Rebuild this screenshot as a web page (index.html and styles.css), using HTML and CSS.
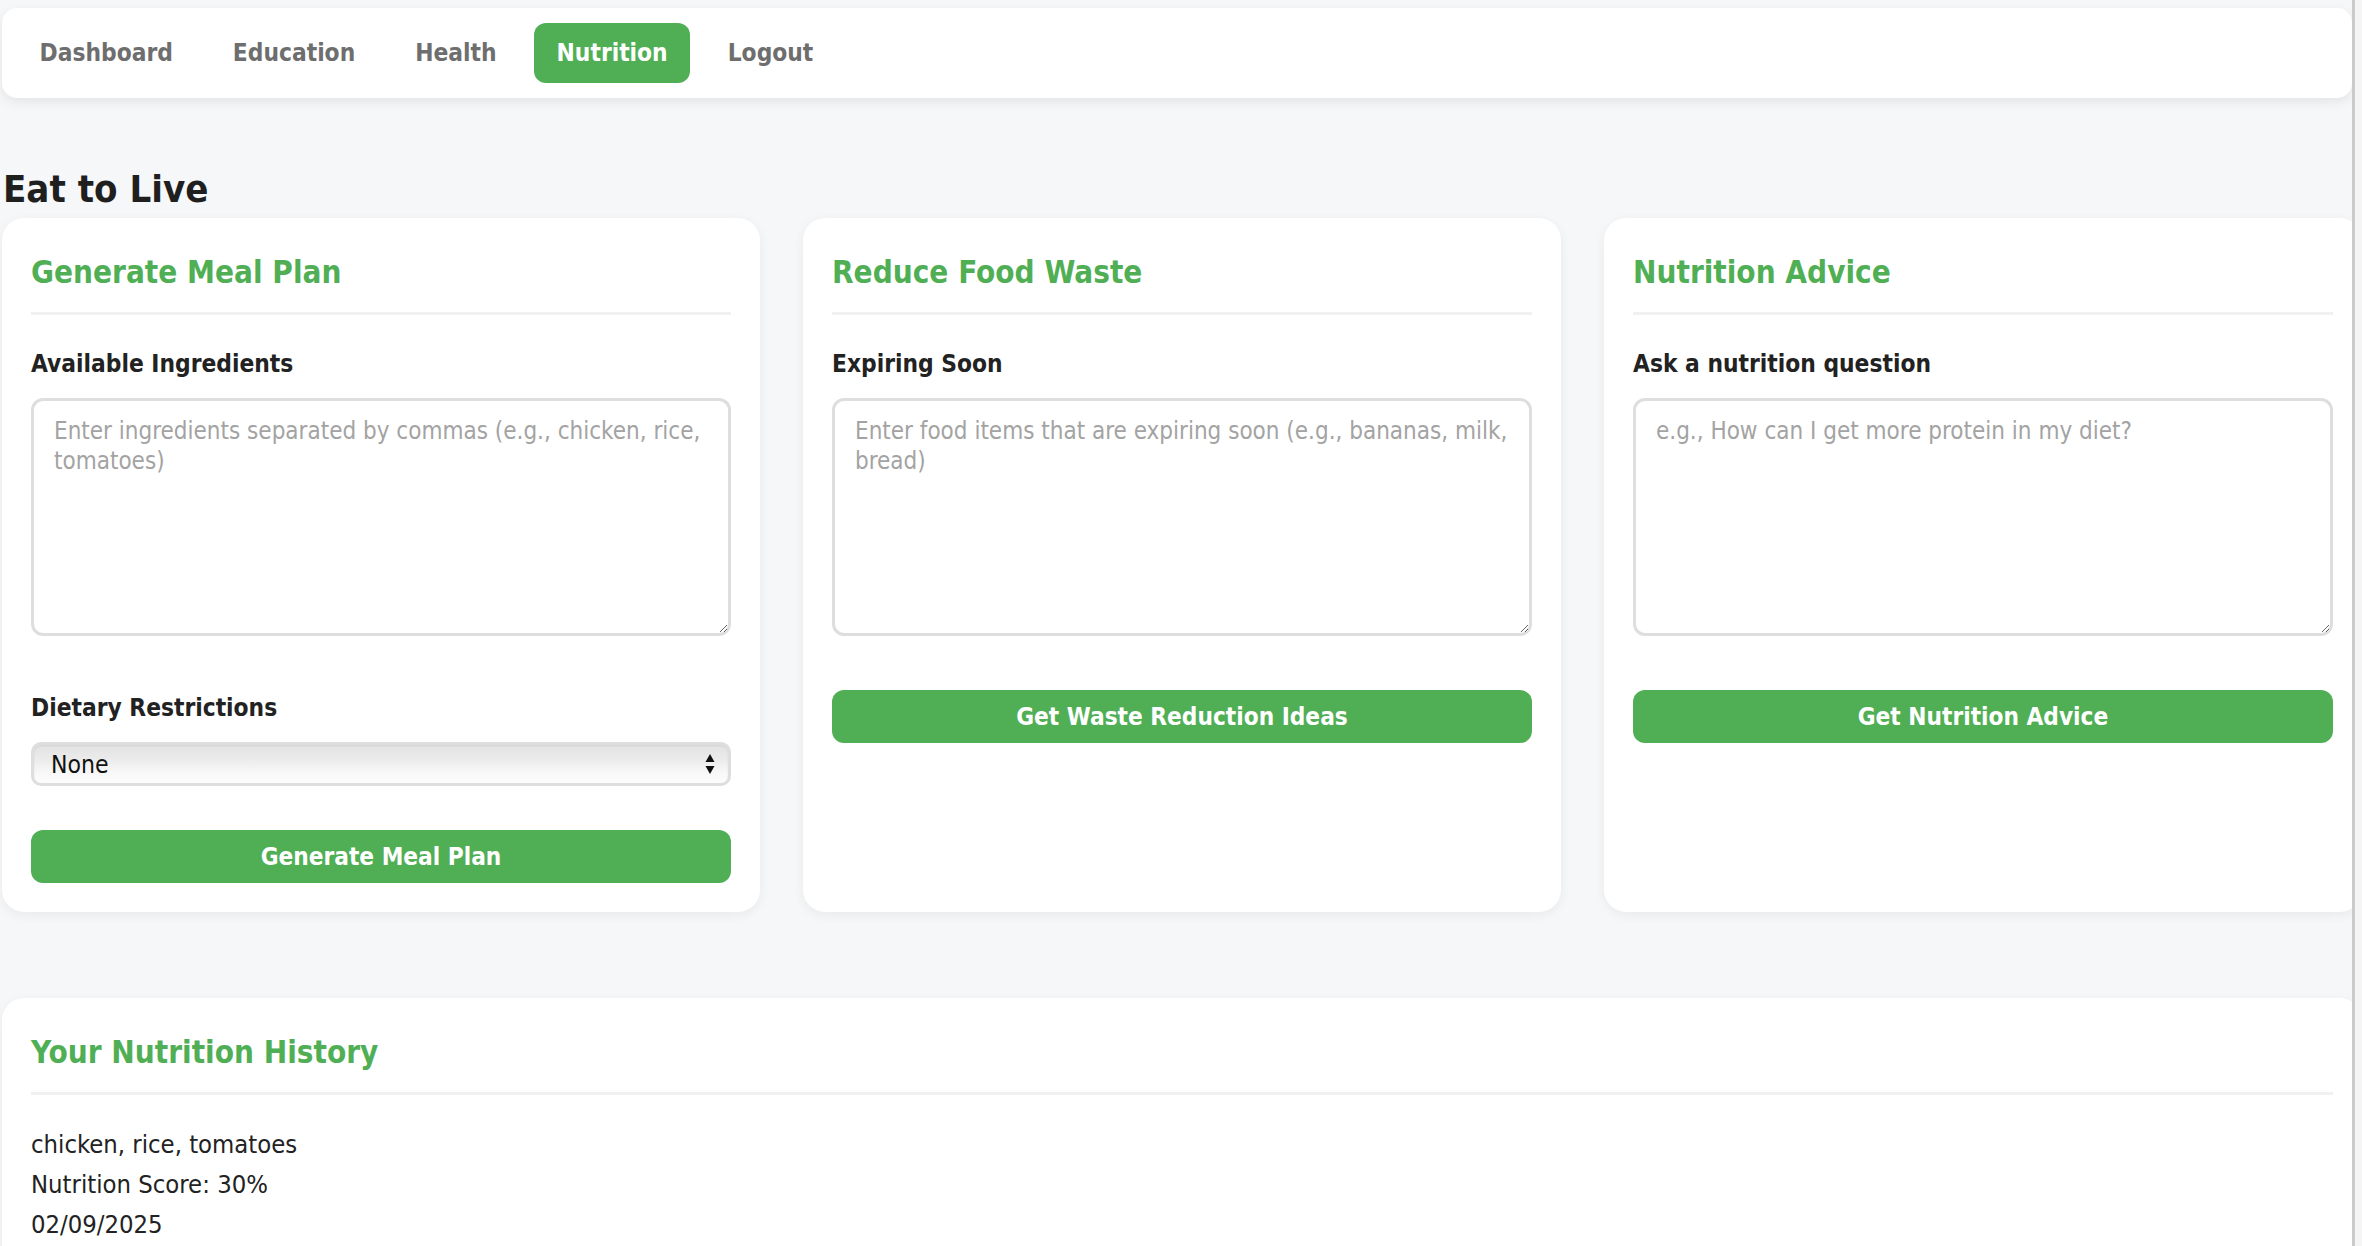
FILE: index.html
```html
<!DOCTYPE html>
<html lang="en">
<head>
<meta charset="utf-8">
<title>Eat to Live</title>
<link rel="stylesheet" href="styles.css">
</head>
<body>
<div class="page">
  <nav class="nav">
    <a class="nav-item">Dashboard</a>
    <a class="nav-item">Education</a>
    <a class="nav-item">Health</a>
    <a class="nav-item active">Nutrition</a>
    <a class="nav-item">Logout</a>
  </nav>

  <h1 class="page-title">Eat to Live</h1>

  <div class="cards">
    <section class="card">
      <h3 class="card-title">Generate Meal Plan</h3>
      <div class="group group-area">
        <label class="label">Available Ingredients</label>
        <textarea class="area" placeholder="Enter ingredients separated by commas (e.g., chicken, rice, tomatoes)"></textarea>
      </div>
      <div class="group group-select">
        <label class="label">Dietary Restrictions</label>
        <div class="select-wrap">
          <select class="select"><option>None</option></select>
          <svg class="select-arrows" width="10" height="22" viewBox="0 0 10 22"><path d="M5 1 L9.5 9 L0.5 9 Z" fill="#111"/><path d="M5 21 L9.5 13 L0.5 13 Z" fill="#111"/></svg>
        </div>
      </div>
      <button class="btn">Generate Meal Plan</button>
    </section>

    <section class="card">
      <h3 class="card-title">Reduce Food Waste</h3>
      <div class="group group-area">
        <label class="label">Expiring Soon</label>
        <textarea class="area" placeholder="Enter food items that are expiring soon (e.g., bananas, milk, bread)"></textarea>
      </div>
      <button class="btn">Get Waste Reduction Ideas</button>
    </section>

    <section class="card">
      <h3 class="card-title">Nutrition Advice</h3>
      <div class="group group-area">
        <label class="label">Ask a nutrition question</label>
        <textarea class="area" placeholder="e.g., How can I get more protein in my diet?"></textarea>
      </div>
      <button class="btn">Get Nutrition Advice</button>
    </section>
  </div>

  <section class="card history">
    <h3 class="card-title">Your Nutrition History</h3>
    <div class="history-item">
      <div class="history-line">chicken, rice, tomatoes</div>
      <div class="history-line">Nutrition Score: 30%</div>
      <div class="history-line">02/09/2025</div>
    </div>
  </section>
</div>
<div class="scrollbar"></div>
</body>
</html>
```

FILE: styles.css
```css
html, body {
  margin: 0;
  padding: 0;
}

body {
  background: #f6f7f9;
  font-family: "DejaVu Sans Condensed", "DejaVu Sans", sans-serif;
  font-stretch: condensed;
  color: #222;
  overflow: hidden;
  height: 1246px;
}

.page {
  margin-left: 2px;
  width: 2360px;
  padding-top: 8px;
}

.nav {
  display: flex;
  align-items: center;
  gap: 15px;
  background: #fff;
  border-radius: 15px;
  padding: 15px;
  box-shadow: 0 4px 12px rgba(0, 0, 0, 0.08);
  width: 2320px;
}

.nav-item {
  font-size: 24.3px;
  line-height: 30px;
  font-weight: bold;
  color: #6e6e6e;
  padding: 15px 22.5px;
  border-radius: 12px;
}

.nav-item.active {
  background: #50af55;
  color: #fff;
}

.page-title {
  font-size: 38px;
  line-height: 44px;
  font-weight: bold;
  color: #1f1f1f;
  margin: 69px 0 7px 1px;
}

.cards {
  display: grid;
  grid-template-columns: repeat(3, 758px);
  column-gap: 43px;
}

.card {
  background: #fff;
  border-radius: 22px;
  padding: 36px 29px 29px;
  box-shadow: 0 3px 12px rgba(0, 0, 0, 0.06);
}

.card-title {
  margin: 0 0 31px;
  font-size: 31.2px;
  line-height: 36px;
  font-weight: bold;
  color: #50af55;
  padding-bottom: 22px;
  border-bottom: 3px solid #f1f1f1;
}

.group-area {
  margin-bottom: 54px;
}

.group-select {
  margin-bottom: 44px;
}

.label {
  display: block;
  font-size: 24.3px;
  line-height: 36px;
  font-weight: bold;
  color: #222;
  margin-bottom: 16px;
}

.area {
  display: block;
  box-sizing: border-box;
  width: 100%;
  height: 238px;
  margin: 0;
  border: 3px solid #dedede;
  border-radius: 12px;
  padding: 15px 20px;
  font-family: inherit;
  font-stretch: condensed;
  font-size: 24px;
  line-height: 30px;
  color: #222;
  background: #fff;
}

.area::placeholder {
  color: #a3a3a3;
}

.select-wrap {
  position: relative;
}

.select {
  display: block;
  box-sizing: border-box;
  width: 100%;
  height: 44px;
  margin: 0;
  appearance: none;
  -webkit-appearance: none;
  border: 3px solid #dedede;
  border-radius: 10px;
  padding: 0 17px;
  font-family: inherit;
  font-stretch: condensed;
  font-size: 24.5px;
  color: #111;
  background: linear-gradient(to bottom, #e2e2e2 0%, #ececec 40%, #f7f7f7 70%, #fdfdfd 100%);
  box-shadow: inset 0 1px 2px rgba(0, 0, 0, 0.08);
}

.select-arrows {
  position: absolute;
  right: 16px;
  top: 11px;
}

.btn {
  display: block;
  width: 100%;
  height: 53px;
  border: none;
  border-radius: 12px;
  background: #50af55;
  color: #fff;
  font-family: inherit;
  font-stretch: condensed;
  font-size: 24.2px;
  font-weight: bold;
  padding: 0;
}

.history {
  margin-top: 86px;
}

.history-item {
  margin-top: -2px;
}

.history-line {
  font-size: 25.4px;
  line-height: 40px;
  color: #222;
}

.scrollbar {
  position: fixed;
  top: 0;
  right: 0;
  bottom: 0;
  width: 10px;
  background: linear-gradient(to right, #cbcbcb 0, #cbcbcb 3px, #f5f5f5 3px, #f5f5f5 100%);
}
```
